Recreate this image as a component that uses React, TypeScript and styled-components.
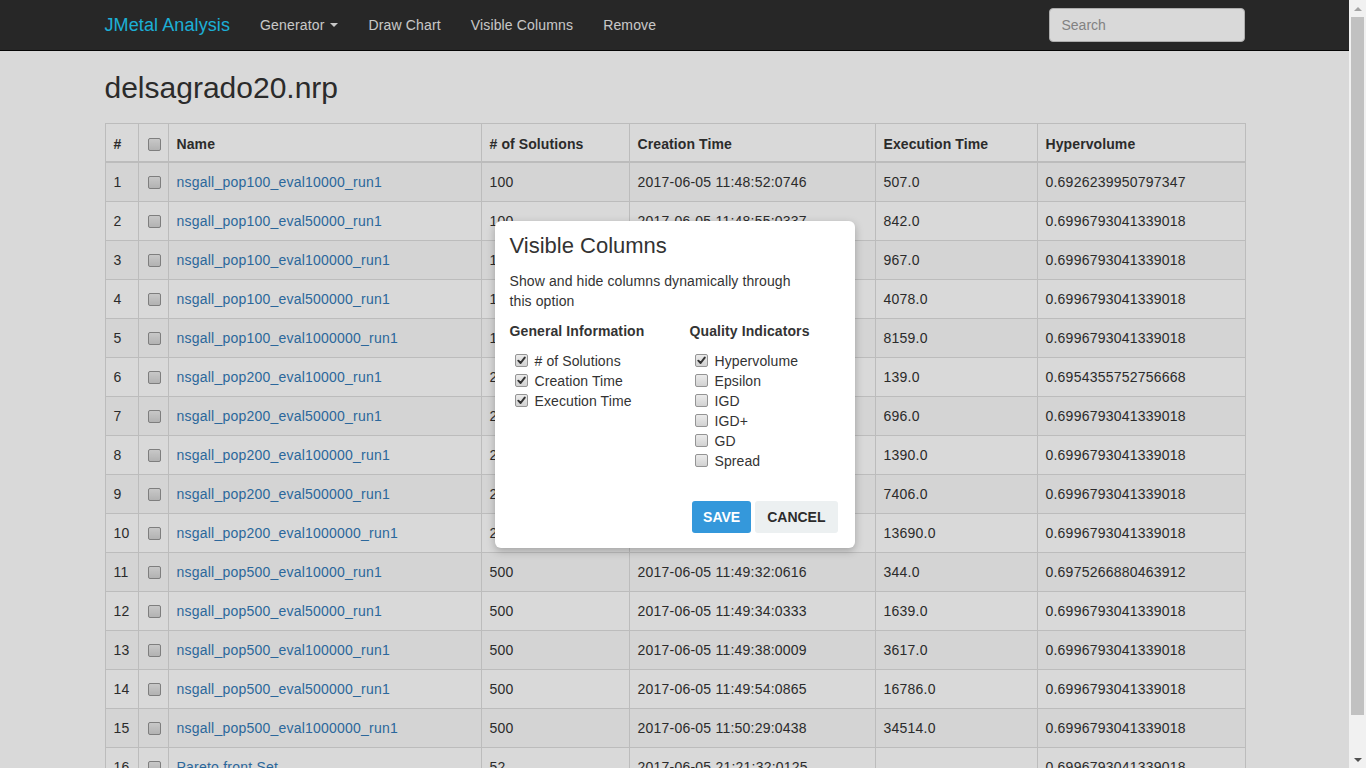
import React from 'react';
import styled, {createGlobalStyle} from 'styled-components';

const GlobalStyle = createGlobalStyle`
  html, body {
    margin: 0;
    padding: 0;
    background: #fff;
    font-family: "Liberation Sans", Arial, Helvetica, sans-serif;
    font-size: 14px;
    line-height: 20px;
    color: #333;
    overflow: hidden;
  }
  * {
    box-sizing: border-box;
  }
`;

const colors = {
  navbar: '#2e2e2e',
  brand: '#22cffb',
  navLink: '#ebebeb',
  border: '#ddd',
  stripe: '#f9f9f9',
  link: '#337ab7',
  text: '#333'
};

const Window = styled.div`
  display: flex;
  height: 100vh;
`;

const Page = styled.div`
  position: relative;
  flex: 1;
  min-width: 0;
  overflow: hidden;
`;

const Scrollbar = styled.div`
  width: 17px;
  flex-shrink: 0;
  background: #f1f1f1;
  display: flex;
  flex-direction: column;
  align-items: center;
`;

const ScrollArrow = styled.div<{$down?: boolean}>`
  height: 17px;
  display: flex;
  align-items: center;
  justify-content: center;
  ${p => (p.$down ? 'margin-top: auto;' : '')}
  &::after {
    content: '';
    width: 0;
    height: 0;
    border-left: 4px solid transparent;
    border-right: 4px solid transparent;
    ${p => (p.$down ? 'border-top: 4px solid #505050;' : 'border-bottom: 4px solid #a3a3a3;')}
  }
`;

const ScrollThumb = styled.div`
  width: 13px;
  height: 698px;
  background: #c1c1c1;
`;

const Navbar = styled.nav`
  height: 51px;
  background: ${colors.navbar};
  border-bottom: 1px solid #080808;
`;

const Container = styled.div`
  width: 1170px;
  margin: 0 auto;
  padding: 0 15px;
`;

const NavInner = styled(Container)`
  display: flex;
  align-items: center;
  height: 50px;
`;

const Brand = styled.a`
  font-size: 18px;
  line-height: 20px;
  padding: 15px 15px;
  margin-left: -15px;
  color: ${colors.brand};
  text-decoration: none;
  letter-spacing: 0.1px;
`;

const NavLink = styled.a`
  display: flex;
  align-items: center;
  padding: 15px;
  color: ${colors.navLink};
  text-decoration: none;
  font-size: 14px;
  letter-spacing: 0.15px;
  &:first-of-type {
    padding-left: 16px;
  }
`;

const Caret = styled.span`
  display: inline-block;
  width: 0;
  height: 0;
  margin-left: 6px;
  border-top: 4px solid ${colors.navLink};
  border-left: 4px solid transparent;
  border-right: 4px solid transparent;
`;

const SearchInput = styled.input`
  margin-left: auto;
  width: 196px;
  height: 34px;
  padding: 6px 12px;
  font-family: inherit;
  font-size: 14px;
  border: 1px solid #ccc;
  border-radius: 4px;
  background: #fff;
  &::placeholder {
    color: #999;
  }
`;

const Title = styled.h2`
  font-size: 30px;
  font-weight: 500;
  line-height: 33px;
  margin: 20px 0 19px;
  color: ${colors.text};
`;

const Table = styled.table`
  width: 1140px;
  table-layout: fixed;
  border-collapse: collapse;
  margin-bottom: 20px;
`;

const Th = styled.th<{$w: number}>`
  width: ${p => p.$w}px;
  text-align: left;
  font-weight: bold;
  padding: 10px 8px 7px;
  border: 1px solid ${colors.border};
  border-bottom-width: 2px;
  vertical-align: middle;
  color: ${colors.text};
  letter-spacing: 0.1px;
`;

const Tr = styled.tr<{$odd: boolean}>`
  background: ${p => (p.$odd ? colors.stripe : '#fff')};
`;

const Td = styled.td`
  padding: 9px 8px 9px;
  border: 1px solid ${colors.border};
  white-space: nowrap;
  overflow: hidden;
  color: ${colors.text};
  letter-spacing: 0.22px;
`;

const NameLink = styled.a`
  color: ${colors.link};
  text-decoration: none;
`;

const Box = styled.span<{$inline?: boolean}>`
  display: inline-flex;
  align-items: center;
  justify-content: center;
  width: 13px;
  height: 13px;
  border: 1px solid #949494;
  border-radius: 2px;
  background: linear-gradient(#ebebeb, #d2d2d2);
  vertical-align: -2px;
  margin-left: ${p => (p.$inline ? '5px' : '1px')};
  margin-right: ${p => (p.$inline ? '7px' : '0')};
  flex-shrink: 0;
`;

const CheckBox = ({checked, inline}: {checked?: boolean; inline?: boolean}) => (
  <Box $inline={inline}>
    {checked && (
      <svg width="9" height="9" viewBox="0 0 10 10">
        <path d="M1.5 5.2 L4 7.8 L8.6 1.8" fill="none" stroke="#333" strokeWidth="2.2" strokeLinecap="round" strokeLinejoin="round" />
      </svg>
    )}
  </Box>
);

const Backdrop = styled.div`
  position: absolute;
  inset: 0;
  background: rgba(0, 0, 0, 0.15);
  display: flex;
  align-items: center;
  justify-content: center;
`;

const Modal = styled.div`
  width: 360px;
  background: #fff;
  border-radius: 6px;
  box-shadow: 0 3px 9px rgba(0, 0, 0, 0.25);
  padding: 12px 17px 15px 15px;
  color: ${colors.text};
  letter-spacing: 0.1px;
`;

const ModalTitle = styled.h4`
  margin: 0;
  font-size: 22px;
  font-weight: normal;
  line-height: 26px;
  letter-spacing: 0;
`;

const ModalText = styled.p`
  margin: 12px 0 10px;
  max-width: 300px;
`;

const Columns = styled.div`
  display: grid;
  grid-template-columns: 180px 1fr;
`;

const GroupTitle = styled.div`
  font-weight: bold;
  margin-bottom: 10px;
`;

const Option = styled.label`
  display: flex;
  align-items: center;
  height: 20px;
`;

const Actions = styled.div`
  display: flex;
  justify-content: flex-end;
  gap: 4px;
  margin-top: 30px;
`;

const Button = styled.button<{$primary?: boolean}>`
  height: 32px;
  padding: 0 ${p => (p.$primary ? '11px' : '12px')};
  border: none;
  border-radius: 3px;
  font-family: inherit;
  font-size: 14px;
  font-weight: bold;
  text-transform: uppercase;
  background: ${p => (p.$primary ? '#3498db' : '#ecf0f1')};
  color: ${p => (p.$primary ? '#fff' : '#2c2c2c')};
`;

type Row = [string, number, string, string, string];

const rows: Row[] = [
  ['nsgall_pop100_eval10000_run1', 100, '2017-06-05 11:48:52:0746', '507.0', '0.6926239950797347'],
  ['nsgall_pop100_eval50000_run1', 100, '2017-06-05 11:48:55:0337', '842.0', '0.6996793041339018'],
  ['nsgall_pop100_eval100000_run1', 100, '2017-06-05 11:48:58:0412', '967.0', '0.6996793041339018'],
  ['nsgall_pop100_eval500000_run1', 100, '2017-06-05 11:49:03:0128', '4078.0', '0.6996793041339018'],
  ['nsgall_pop100_eval1000000_run1', 100, '2017-06-05 11:49:08:0590', '8159.0', '0.6996793041339018'],
  ['nsgall_pop200_eval10000_run1', 200, '2017-06-05 11:49:10:0211', '139.0', '0.6954355752756668'],
  ['nsgall_pop200_eval50000_run1', 200, '2017-06-05 11:49:11:0384', '696.0', '0.6996793041339018'],
  ['nsgall_pop200_eval100000_run1', 200, '2017-06-05 11:49:13:0077', '1390.0', '0.6996793041339018'],
  ['nsgall_pop200_eval500000_run1', 200, '2017-06-05 11:49:17:0953', '7406.0', '0.6996793041339018'],
  ['nsgall_pop200_eval1000000_run1', 200, '2017-06-05 11:49:26:0702', '13690.0', '0.6996793041339018'],
  ['nsgall_pop500_eval10000_run1', 500, '2017-06-05 11:49:32:0616', '344.0', '0.6975266880463912'],
  ['nsgall_pop500_eval50000_run1', 500, '2017-06-05 11:49:34:0333', '1639.0', '0.6996793041339018'],
  ['nsgall_pop500_eval100000_run1', 500, '2017-06-05 11:49:38:0009', '3617.0', '0.6996793041339018'],
  ['nsgall_pop500_eval500000_run1', 500, '2017-06-05 11:49:54:0865', '16786.0', '0.6996793041339018'],
  ['nsgall_pop500_eval1000000_run1', 500, '2017-06-05 11:50:29:0438', '34514.0', '0.6996793041339018'],
  ['Pareto front Set', 52, '2017-06-05 21:21:32:0125', '', '0.6996793041339018']
];

const App = () => {
  return (
    <Window>
      <GlobalStyle />
      <Page>
        <Navbar>
          <NavInner>
            <Brand href="#">JMetal Analysis</Brand>
            <NavLink href="#">
              Generator <Caret />
            </NavLink>
            <NavLink href="#">Draw Chart</NavLink>
            <NavLink href="#">Visible Columns</NavLink>
            <NavLink href="#">Remove</NavLink>
            <SearchInput placeholder="Search" />
          </NavInner>
        </Navbar>
        <Container>
          <Title>delsagrado20.nrp</Title>
          <Table>
            <thead>
              <tr>
                <Th $w={33}>#</Th>
                <Th $w={30}>
                  <CheckBox />
                </Th>
                <Th $w={313}>Name</Th>
                <Th $w={148}># of Solutions</Th>
                <Th $w={246}>Creation Time</Th>
                <Th $w={162}>Execution Time</Th>
                <Th $w={208}>Hypervolume</Th>
              </tr>
            </thead>
            <tbody>
              {rows.map(([name, solutions, created, exec, hv], i) => (
                <Tr key={name} $odd={i % 2 === 0}>
                  <Td>{i + 1}</Td>
                  <Td>
                    <CheckBox />
                  </Td>
                  <Td>
                    <NameLink href="#">{name}</NameLink>
                  </Td>
                  <Td>{solutions}</Td>
                  <Td>{created}</Td>
                  <Td>{exec}</Td>
                  <Td>{hv}</Td>
                </Tr>
              ))}
            </tbody>
          </Table>
        </Container>
        <Backdrop>
          <Modal>
            <ModalTitle>Visible Columns</ModalTitle>
            <ModalText>Show and hide columns dynamically through this option</ModalText>
            <Columns>
              <div>
                <GroupTitle>General Information</GroupTitle>
                <Option><CheckBox inline checked /># of Solutions</Option>
                <Option><CheckBox inline checked />Creation Time</Option>
                <Option><CheckBox inline checked />Execution Time</Option>
              </div>
              <div>
                <GroupTitle>Quality Indicators</GroupTitle>
                <Option><CheckBox inline checked />Hypervolume</Option>
                <Option><CheckBox inline />Epsilon</Option>
                <Option><CheckBox inline />IGD</Option>
                <Option><CheckBox inline />IGD+</Option>
                <Option><CheckBox inline />GD</Option>
                <Option><CheckBox inline />Spread</Option>
              </div>
            </Columns>
            <Actions>
              <Button $primary>Save</Button>
              <Button>Cancel</Button>
            </Actions>
          </Modal>
        </Backdrop>
      </Page>
      <Scrollbar>
        <ScrollArrow />
        <ScrollThumb />
        <ScrollArrow $down />
      </Scrollbar>
    </Window>
  );
};

export default App;
